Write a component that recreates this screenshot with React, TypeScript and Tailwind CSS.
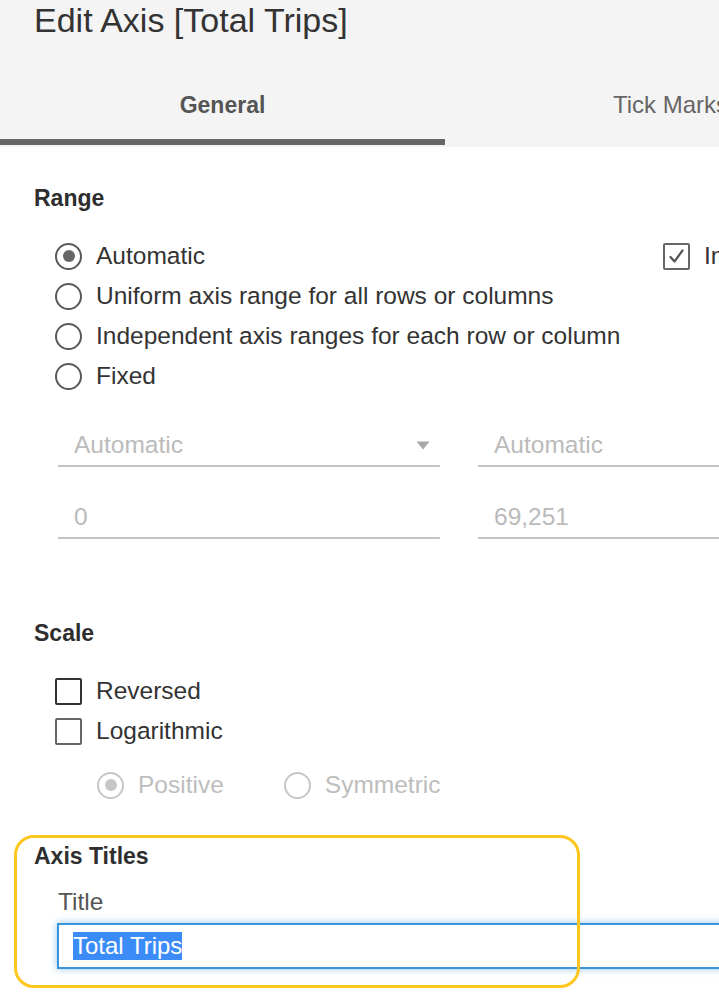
import React from "react";

const font = { fontFamily: '"Liberation Sans", Arial, sans-serif' };

function Radio({ checked, disabled, label }: { checked?: boolean; disabled?: boolean; label: string }) {
  return (
    <div className="flex h-[40px] items-center">
      <span
        className={
          "flex h-[27px] w-[27px] shrink-0 items-center justify-center rounded-full border-2 " +
          (disabled ? "border-[#c6c6c6]" : "border-[#5a5a5a]")
        }
      >
        {checked && (
          <span className={"h-[12px] w-[12px] rounded-full " + (disabled ? "bg-[#c6c6c6]" : "bg-[#666666]")} />
        )}
      </span>
      <span
        className={
          "ml-[14px] whitespace-nowrap text-[24.5px] leading-[40px] " +
          (disabled ? "text-[#bdbdbd]" : "text-[#333333]")
        }
      >
        {label}
      </span>
    </div>
  );
}

function Checkbox({ checked, label, dark }: { checked?: boolean; label: string; dark?: boolean }) {
  return (
    <div className="flex h-[40px] items-center">
      <span
        className={
          "flex h-[27px] w-[27px] shrink-0 items-center justify-center rounded-[2px] border-2 " +
          (dark ? "border-[#333333]" : "border-[#666666]")
        }
      >
        {checked && (
          <svg width="19" height="19" viewBox="0 0 19 19">
            <path d="M3.5 10 L7.5 14.5 L15.5 3.5" fill="none" stroke="#555555" strokeWidth="2.2" strokeLinecap="round" strokeLinejoin="round" />
          </svg>
        )}
      </span>
      <span className="ml-[14px] whitespace-nowrap text-[24.5px] leading-[40px] text-[#333333]">{label}</span>
    </div>
  );
}

function Field({ value, arrow }: { value: string; arrow?: boolean }) {
  return (
    <div className="flex h-[42px] w-[382px] shrink-0 items-center justify-between rounded-b-[1px] border-b-2 border-[#c4c4c4] pl-[16px] pr-[10px]">
      <span className="text-[24.5px] leading-[40px] text-[#bbbbbb]">{value}</span>
      {arrow && (
        <svg width="14" height="9" viewBox="0 0 14 9">
          <path d="M0.5 0.5 H13.5 L7 8.5 Z" fill="#a8a8a8" />
        </svg>
      )}
    </div>
  );
}

export default function App() {
  return (
    <div className="min-h-[1000px] w-full overflow-hidden bg-white" style={font}>
      <header className="h-[147px] bg-[#f4f4f4]">
        <div className="h-[40px] whitespace-nowrap pl-[34px] text-[34px] leading-[40px] text-[#333333]">
          Edit Axis [Total Trips]
        </div>
        <div className="mt-[53px] flex">
          <div className="flex w-[445px] shrink-0 flex-col items-center">
            <span className="text-[23px] font-bold leading-[24px] text-[#555555]">General</span>
            <span className="mt-[22px] h-[6px] w-full bg-[#666666]" />
          </div>
          <div className="flex w-[451px] shrink-0 flex-col items-center">
            <span className="whitespace-nowrap text-[24px] leading-[24px] text-[#666666]">Tick Marks</span>
          </div>
        </div>
      </header>

      <main className="pl-[34px]">
        <section>
          <h2 className="mt-[37px] text-[23px] font-bold leading-[28px] text-[#2e2e2e]">Range</h2>
          <div className="mt-[24px] flex">
            <div className="w-[629px] shrink-0 pl-[21px]">
              <Radio checked label="Automatic" />
              <Radio label="Uniform axis range for all rows or columns" />
              <Radio label="Independent axis ranges for each row or column" />
              <Radio label="Fixed" />
            </div>
            <div className="shrink-0">
              <Checkbox checked label="Include zero" />
            </div>
          </div>
          <div className="ml-[24px] mt-[29px] flex gap-[38px]">
            <Field value="Automatic" arrow />
            <Field value="Automatic" />
          </div>
          <div className="ml-[24px] mt-[30px] flex gap-[38px]">
            <Field value="0" />
            <Field value="69,251" />
          </div>
        </section>

        <section>
          <h2 className="mt-[80px] text-[23px] font-bold leading-[28px] text-[#2e2e2e]">Scale</h2>
          <div className="mt-[24px] pl-[21px]">
            <Checkbox dark label="Reversed" />
            <Checkbox label="Logarithmic" />
            <div className="mt-[14px] flex gap-[60px] pl-[42px]">
              <Radio checked disabled label="Positive" />
              <Radio disabled label="Symmetric" />
            </div>
          </div>
        </section>

        <section className="relative">
          <h2 className="mt-[37px] text-[23px] font-bold leading-[28px] text-[#2e2e2e]">Axis Titles</h2>
          <div className="mt-[18px] pl-[24px] text-[24.5px] leading-[28px] text-[#555555]">Title</div>
          <div className="ml-[23px] mt-[7px] flex h-[46px] w-[700px] items-center border-2 border-[#3a94dc] bg-white pl-[14px] shadow-[0_0_7px_rgba(58,148,220,0.55)]">
            <span className="bg-[#3b8cf6] text-[24px] leading-[28px] text-white">Total Trips</span>
          </div>
          <div className="pointer-events-none absolute left-[-20px] top-[-7px] h-[153px] w-[566px] rounded-[20px] border-[3px] border-[#fec61e]" />
        </section>
      </main>
    </div>
  );
}
